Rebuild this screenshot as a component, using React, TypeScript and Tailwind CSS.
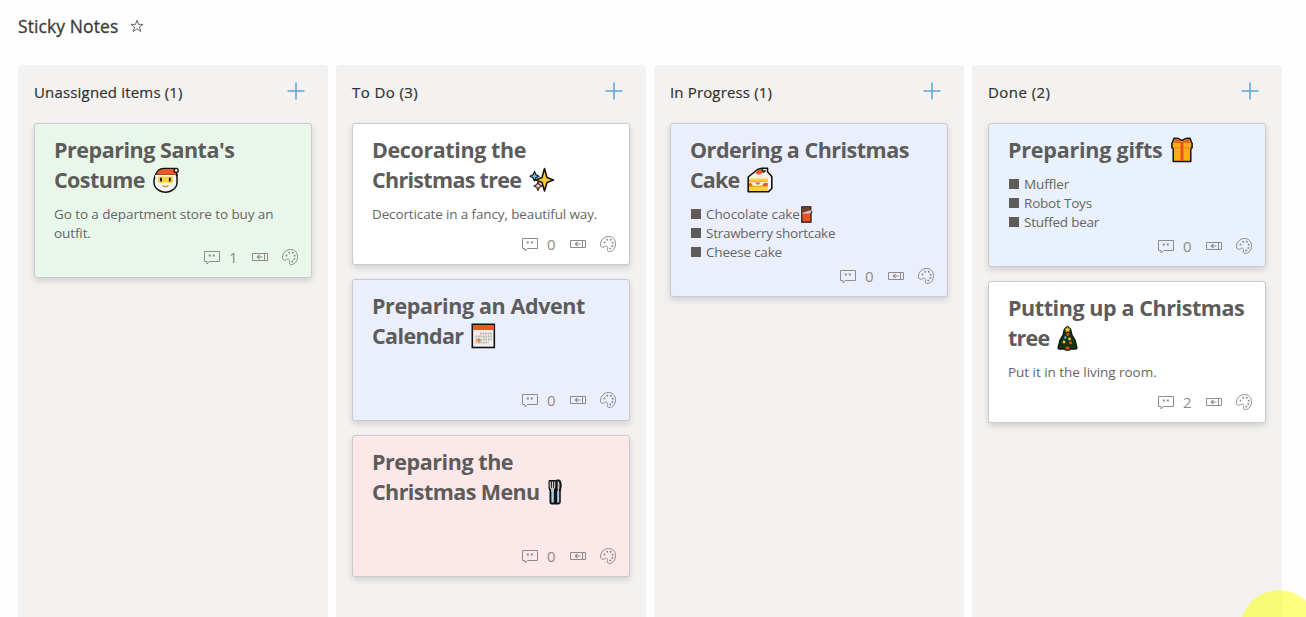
import type { ReactNode } from "react";

const Santa = () => (
  <svg width="26" height="26" viewBox="0 0 26 26" className="shrink-0">
    <path d="M3.500 6.500C1.500 9 1 12 1 15.500c0 3.500 2.500 6.500 5.200 8 1.800 1.100 4 1.700 6.300 1.700s4.500-.6 6.300-1.700c2.700-1.500 5.200-4.500 5.200-8V7" fill="#f4f4f4" stroke="#111" strokeWidth="1.500" />
    <path d="M2.600 8.500C3.500 4 6.500 1.300 11 1.300h11c1.300 2 1.800 4.200 1.800 7.200z" fill="#ea5a24" stroke="#111" strokeWidth="1.300" />
    <path d="M2.200 8h20.600v2H2.200z" fill="#fff" />
    <path d="M5 9.500h15v4.500c0 1.800-2 2.600-3.500 2-2.400-.7-5.600-.7-8 0-1.500.6-3.500-.2-3.500-2z" fill="#fcd435" />
    <path d="M8 10.800v3.800M16.800 10.800v3.800" stroke="#111" strokeWidth="1.800" />
    <path d="M9.500 18.500c1.700 1.300 4.300 1.300 6 0" stroke="#e8873c" strokeWidth="1.500" fill="none" />
    <circle cx="23.200" cy="3.400" r="2" fill="#fff" stroke="#111" strokeWidth="1.300" />
  </svg>
);

const Sparkles = () => (
  <svg width="26" height="26" viewBox="0 0 26 26" className="shrink-0" strokeLinejoin="round">
    <path d="M15.500 1.500 18 10.500l6.500 2.500-6.500 2.500-2.500 8.500-2.500-8.500L6.800 13l6.200-2.500z" fill="#fcc838" stroke="#1a1512" strokeWidth="1.600" />
    <path d="M5.500 4.500 7 7.800l3 1.500-3 1.500-1.500 3.200L4 10.800 1 9.300l3-1.500z" fill="#68b8ec" stroke="#111" strokeWidth="1.200" />
    <path d="M9 15l1.200 2.500 2.800 1.500-2.800 1.500L9 23.500l-1.200-3L5 19l2.800-1.500z" fill="#f6cdb4" stroke="#3a2a22" strokeWidth="1.200" />
  </svg>
);

const CalendarEmoji = () => (
  <svg width="25" height="26" viewBox="0 0 25 26" className="shrink-0">
    <rect x="1.300" y="1.300" width="22" height="23.200" fill="#f2f0ee" stroke="#111" strokeWidth="1.600" />
    <path d="M2 2h20.600v5H2z" fill="#ea5a24" />
    <path d="M9 10.500h12M4.500 13.500H21M4.500 16.500H21M4.500 19.500h13" stroke="#b4b1ae" strokeWidth="1.800" strokeDasharray="1.700 .8" />
    <path d="M5.500 17.500H10M7.700 15.300v4.500" stroke="#e08030" strokeWidth="1.500" />
  </svg>
);

const Cutlery = () => (
  <svg width="14" height="26" viewBox="0 0 14 26" className="shrink-0" strokeLinejoin="round">
    <path d="M1 1.500h6.300L9.200 1h2.300c1.200 1 1.700 3 1.700 6l-1 6v10.500c0 1-.8 1.500-1.700 1.500H3.600c-1 0-1.600-.5-1.600-1.500V12L1 9z" fill="#111" stroke="#111" />
    <path d="M2.200 2.500v5c0 1.500.6 2 1.400 2.600V12h1.800v-2c.9-.5 1.300-1 1.300-2.500v-5" fill="none" stroke="#cfcfcf" strokeWidth="1.200" />
    <path d="M4.500 2.500V11" stroke="#cfcfcf" strokeWidth="1.300" />
    <path d="M4.600 11.500v12" stroke="#a6d5ea" strokeWidth="2.400" />
    <path d="M9.600 2.500h1.300c.8 1.500.9 6-.2 9.500H9.600z" fill="#c5c5c5" />
    <path d="M10.200 12v11.500" stroke="#a6d5ea" strokeWidth="2" />
  </svg>
);

const Cake = () => (
  <svg width="26" height="26" viewBox="0 0 26 26" className="shrink-0" strokeLinejoin="round">
    <path d="M1.200 10 10.500 2.500 15 1.200h5.500v3.500l4.300 4.800v12l-3.500 3.300H1.200z" fill="#f5f3f1" stroke="#111" strokeWidth="1.600" />
    <path d="M8.500 5.500c1.500-2.500 5.500-3.800 7-2.500.8 1.500-.5 4.200-3 4.500-1.800.2-3.500-.3-4-2z" fill="#ea5a24" />
    <path d="M14.500 1.500l2 3.500 2-1.500" fill="none" stroke="#26351c" strokeWidth="1.700" />
    <path d="M2 11.500h18.800V24H2z" fill="#fcd23c" />
    <path d="M2 15h18.800v4H2z" fill="#fbe9d8" />
    <path d="M2 14.200h18.800" stroke="#f0a52a" />
    <path d="M2 19v-2.500l1.500-.8L6 19zm6-3.500h5.500L11 18zM15 19l2-3h3.800v3z" fill="#ea5a24" />
    <path d="M2 19.400h18.800" stroke="#f0a52a" />
  </svg>
);

const Chocolate = () => (
  <svg width="12" height="17" viewBox="0 0 12 17" className="ml-px shrink-0">
    <path d="M.8.800h9v5l1 .2-.8 1.500v8.700H.8z" fill="#ea5124" stroke="#1a1110" strokeWidth="1.200" />
    <path d="M1.300 1.300h8v3.500l-8 1.700z" fill="#6c3f30" />
    <path d="M1 7 10.200 4v2L9 7.500H1z" fill="#c8c4c2" />
  </svg>
);

const Gift = () => (
  <svg width="22" height="26" viewBox="0 0 22 26" className="shrink-0" strokeLinejoin="round">
    <path d="M1.500 5.500 3 1.300l4.500.2L10 3.200h2l2.500-1.700 4.500-.2 1.500 4.200.6.500v4.700l-1.300 1V24.500H2.200V11.700l-1.300-1V6z" fill="#fbad18" stroke="#111" strokeWidth="1.500" />
    <path d="M3 5.800 4.200 2.400 7 2.700l3 2h2l3-2 2.800-.3L19 5.800z" fill="#ea5a24" />
    <path d="M2 10.700h18" stroke="#f0872a" strokeWidth="1.400" />
    <path d="M11 5v19" stroke="#ea5124" strokeWidth="3" />
  </svg>
);

const Tree = () => (
  <svg width="21" height="26" viewBox="0 0 21 26" className="shrink-0" strokeLinejoin="round">
    <path d="M10.500 1.500 7.500 4l-1.500 6-3 5-2 8 1 1h5.500l1.500 1.200h3L13.500 24H19l1-1-2-8-3-5-1.500-6z" fill="#16350f" stroke="#111" strokeWidth="1.300" />
    <path d="M10.500 1.500l1 2 2 .3-1.300 1.500.2 1.700-1.900-.8-1.900.8.2-1.700L7.500 3.800l2-.3z" fill="#fcc52f" />
    <circle cx="10.800" cy="9.500" r="1.400" fill="#ea5124" />
    <circle cx="8.300" cy="12.500" r="1.200" fill="#62b4ea" />
    <circle cx="12.500" cy="14" r="1.400" fill="#fcc52f" />
    <circle cx="7" cy="17" r="1.400" fill="#fcc52f" />
    <circle cx="13.500" cy="17.800" r="1.400" fill="#ea5124" />
    <path d="M8.500 24.500v-2l1-1h2l1 1v2z" fill="#d9481f" />
  </svg>
);

const CommentIcon = () => (
  <svg width="16" height="16" viewBox="0 0 16 16" fill="none" stroke="#8f8a8c" className="shrink-0">
    <path d="M.5 2.500h15v10H5.500l-2.500 2.500v-2.500H.5z" />
    <path d="M4.800 5.500h2v2h-2zM8.800 5.500h2v2h-2z" fill="#8f8a8c" stroke="none" />
  </svg>
);

const TicketIcon = () => (
  <svg width="16" height="16" viewBox="0 0 16 16" fill="none" stroke="#8f8a8c" className="shrink-0">
    <path d="M.5 4.500h15v7H.5zM12.500 4.500v7" />
    <path d="M5 8h5.500M7.500 5.800 5.300 8l2.200 2.200" strokeWidth="1.200" />
  </svg>
);

const PaletteIcon = () => (
  <svg width="16" height="16" viewBox="0 0 16 16" fill="none" stroke="#8f8a8c" className="shrink-0">
    <path d="M8.500.5c4.200 0 7 3 7 7.200 0 4.400-2.600 7.800-6.300 7.800-1.500 0-2-.9-1.800-2 .2-1.500.4-2.400-.6-3.100-1-.8-1.800.2-2.900.7C2 11.800.5 10.700.5 8.700.5 4.200 4 .5 8.500.5z" />
    <g fill="#8f8a8c" stroke="none">
      <circle cx="4.500" cy="6.500" r="1" />
      <circle cx="7.200" cy="3.800" r="1" />
      <circle cx="10.800" cy="3.800" r="1" />
      <circle cx="12.700" cy="6.800" r="1" />
      <circle cx="12.300" cy="10" r="1" />
      <circle cx="10.200" cy="12.500" r="1" />
    </g>
  </svg>
);

type Line = { text: string; track: string; emoji?: ReactNode; bullet?: boolean };
type Note = { color: string; title: Line[]; body: Line[]; comments: number };
type Column = { name: string; track: string; notes: Note[] };

const columns: Column[] = [
  {
    name: "Unassigned items (1)",
    track: "tracking-[0.17px]",
    notes: [
      {
        color: "bg-[#e9f7ea]",
        title: [
          { text: "Preparing Santa's", track: "tracking-[-0.47px]" },
          { text: "Costume", track: "tracking-[-0.58px]", emoji: <Santa /> },
        ],
        body: [
          { text: "Go to a department store to buy an", track: "tracking-[-0.09px]" },
          { text: "outfit.", track: "tracking-[-0.1px]" },
        ],
        comments: 1,
      },
    ],
  },
  {
    name: "To Do (3)",
    track: "tracking-[0.4px]",
    notes: [
      {
        color: "bg-white",
        title: [
          { text: "Decorating the", track: "tracking-[-0.4px]" },
          { text: "Christmas tree", track: "tracking-[-0.7px]", emoji: <Sparkles /> },
        ],
        body: [{ text: "Decorticate in a fancy, beautiful way.", track: "tracking-[-0.13px]" }],
        comments: 0,
      },
      {
        color: "bg-[#ebeffc]",
        title: [
          { text: "Preparing an Advent", track: "tracking-[-0.38px]" },
          { text: "Calendar", track: "tracking-[-0.62px]", emoji: <CalendarEmoji /> },
        ],
        body: [],
        comments: 0,
      },
      {
        color: "bg-[#fce8e9]",
        title: [
          { text: "Preparing the", track: "tracking-[-0.45px]" },
          { text: "Christmas Menu", track: "tracking-[-0.58px]", emoji: <Cutlery /> },
        ],
        body: [],
        comments: 0,
      },
    ],
  },
  {
    name: "In Progress (1)",
    track: "tracking-[0.15px]",
    notes: [
      {
        color: "bg-[#ebeffc]",
        title: [
          { text: "Ordering a Christmas", track: "tracking-[-0.5px]" },
          { text: "Cake", track: "tracking-[-0.85px]", emoji: <Cake /> },
        ],
        body: [
          { text: "Chocolate cake", track: "tracking-[-0.08px]", bullet: true, emoji: <Chocolate /> },
          { text: "Strawberry shortcake", track: "tracking-[-0.27px]", bullet: true },
          { text: "Cheese cake", track: "tracking-[-0.2px]", bullet: true },
        ],
        comments: 0,
      },
    ],
  },
  {
    name: "Done (2)",
    track: "tracking-[0.45px]",
    notes: [
      {
        color: "bg-[#e9f2fc]",
        title: [{ text: "Preparing gifts", track: "tracking-[-0.22px]", emoji: <Gift /> }],
        body: [
          { text: "Muffler", track: "tracking-[-0.14px]", bullet: true },
          { text: "Robot Toys", track: "tracking-[-0.2px]", bullet: true },
          { text: "Stuffed bear", track: "tracking-[-0.22px]", bullet: true },
        ],
        comments: 0,
      },
      {
        color: "bg-white",
        title: [
          { text: "Putting up a Christmas", track: "tracking-[-0.42px]" },
          { text: "tree", track: "tracking-[-0.8px]", emoji: <Tree /> },
        ],
        body: [{ text: "Put it in the living room.", track: "tracking-[-0.04px]" }],
        comments: 2,
      },
    ],
  },
];

function NoteCard({ note }: { note: Note }) {
  return (
    <article
      className={`flex min-h-[142px] flex-col rounded-[3px] border border-[#cbcbcb] pt-[11px] pr-[13px] pb-2.5 pl-[19px] shadow-[0_3px_6px_rgba(0,0,0,0.14)] ${note.color}`}
    >
      <h2 className="text-[21.5px] leading-[30px] font-bold text-[#5d5c5b]">
        {note.title.map((line) => (
          <span key={line.text} className="flex h-[30px] items-center gap-2 whitespace-nowrap">
            <span className={line.track}>{line.text}</span>
            {line.emoji}
          </span>
        ))}
      </h2>
      {note.body.length > 0 && (
        <div className="mt-2.5 text-[13.5px] leading-[19px] text-[#666564]">
          {note.body.map((line) => (
            <div key={line.text} className="flex h-[19px] items-center whitespace-nowrap">
              {line.bullet && <span className="mr-[5px] mb-px ml-px size-2.5 bg-[#5d5c5b]" />}
              <span className={line.track}>{line.text}</span>
              {line.emoji}
            </div>
          ))}
        </div>
      )}
      <footer className="mt-auto flex items-center justify-end pt-1 text-[15px] leading-5 text-[#8f8a88]">
        <CommentIcon />
        <span className="mr-3.5 ml-2 w-2.5 text-center tracking-tight">{note.comments}</span>
        <TicketIcon />
        <span className="ml-3.5 flex">
          <PaletteIcon />
        </span>
      </footer>
    </article>
  );
}

export default function App() {
  return (
    <div className="relative flex h-[617px] w-[1306px] flex-col overflow-hidden bg-[#fefefe] font-['Open_Sans','Noto_Sans',sans-serif]">
      <header className="flex h-[65px] items-center gap-3 pb-3 pl-[18px]">
        <h1 className="text-[17.5px] font-medium tracking-[0.1px] text-[#3b3a39] [-webkit-text-stroke:0.3px_#3b3a39]">
          Sticky Notes
        </h1>
        <svg width="14" height="14" viewBox="0 0 14 14" fill="none" stroke="#6f6b69" className="mb-0.5">
          <path d="M7 1.200l1.500 4.200h4.600L9.400 8l1.400 4.500L7 9.800l-3.800 2.700L4.600 8 .9 5.400h4.600z" />
        </svg>
      </header>
      <main className="flex flex-1 gap-2 pl-[18px]">
        {columns.map((column) => (
          <section key={column.name} className="flex w-[310px] flex-col rounded-t-[4px] bg-[#f3f2f1] px-4">
            <div className="flex h-[58px] items-center justify-between pr-[7px] pb-1">
              <h3
                className={`pt-px text-[15px] font-medium text-[#323130] [-webkit-text-stroke:0.2px_#323130] ${column.track}`}
              >
                {column.name}
              </h3>
              <svg width="18" height="18" viewBox="0 0 18 18" stroke="#5ba4d3" strokeWidth="1.500" className="mb-0.5">
                <path d="M.5 9h17M9 .5v17" />
              </svg>
            </div>
            <div className="flex flex-col gap-3.5">
              {column.notes.map((note) => (
                <NoteCard key={note.title[0].text} note={note} />
              ))}
            </div>
          </section>
        ))}
      </main>
      <div className="absolute top-[590px] left-[1240px] size-[78px] rounded-full bg-[#ffff00]/50" />
    </div>
  );
}
